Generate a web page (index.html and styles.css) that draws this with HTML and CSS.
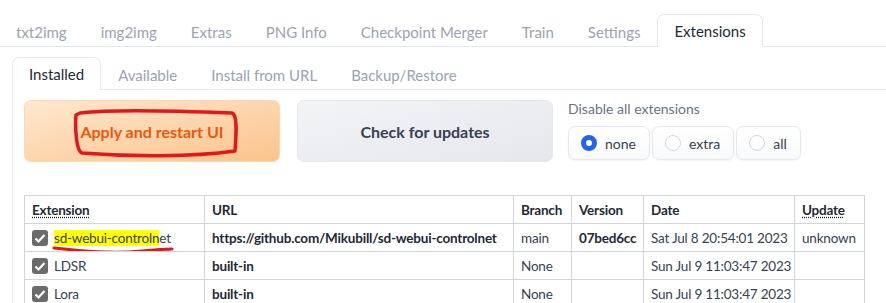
FILE: index.html
```html
<!DOCTYPE html>
<html lang="en">
<head>
    <meta charset="UTF-8">
    <title>Extensions</title>
    <link rel="stylesheet" href="styles.css">
</head>
<body>
    <nav class="tabs">
        <button class="tab">txt2img</button>
        <button class="tab">img2img</button>
        <button class="tab">Extras</button>
        <button class="tab">PNG Info</button>
        <button class="tab">Checkpoint Merger</button>
        <button class="tab">Train</button>
        <button class="tab">Settings</button>
        <button class="tab active">Extensions</button>
    </nav>
    <div class="subpage">
        <nav class="tabs subtabs">
            <button class="tab active">Installed</button>
            <button class="tab">Available</button>
            <button class="tab">Install from URL</button>
            <button class="tab">Backup/Restore</button>
        </nav>
        <div class="panel">
            <div class="actions">
                <button class="btn btn-primary">
                    Apply and restart UI
                    <svg class="scribble" width="170" height="52" viewBox="0 0 170 52">
                        <path d="M8 6 C40 2, 110 4, 160 6 C166 8, 164 30, 163 44 C120 50, 60 50, 10 46 C4 44, 3 20, 4 8 Z" fill="none" stroke="#e3161c" stroke-width="3.5" stroke-linejoin="round"/>
                    </svg>
                </button>
                <button class="btn btn-secondary">Check for updates</button>
                <div class="radio-block">
                    <div class="radio-label">Disable all extensions</div>
                    <div class="radio-group">
                        <label class="radio-item"><span class="radio checked"></span>none</label>
                        <label class="radio-item"><span class="radio"></span>extra</label>
                        <label class="radio-item"><span class="radio"></span>all</label>
                    </div>
                </div>
            </div>
            <table class="ext-table">
                <colgroup>
                    <col class="col-ext">
                    <col class="col-url">
                    <col class="col-branch">
                    <col class="col-version">
                    <col class="col-date">
                    <col class="col-update">
                </colgroup>
                <thead>
                    <tr>
                        <th><abbr>Extension</abbr></th>
                        <th>URL</th>
                        <th>Branch</th>
                        <th>Version</th>
                        <th>Date</th>
                        <th><abbr>Update</abbr></th>
                    </tr>
                </thead>
                <tbody>
                    <tr>
                        <td><span class="check"></span><span class="marked"><mark>sd-webui-controln</mark>et<svg class="underline" width="124" height="10" viewBox="0 0 124 10"><path d="M2 3 C30 6, 60 9, 90 6 C104 5, 114 4, 120 4" fill="none" stroke="#e3161c" stroke-width="3" stroke-linecap="round"/></svg></span></td>
                        <td class="bold">https://github.com/Mikubill/sd-webui-controlnet</td>
                        <td>main</td>
                        <td class="bold">07bed6cc</td>
                        <td>Sat Jul 8 20:54:01 2023</td>
                        <td>unknown</td>
                    </tr>
                    <tr>
                        <td><span class="check"></span>LDSR</td>
                        <td class="bold">built-in</td>
                        <td>None</td>
                        <td></td>
                        <td>Sun Jul 9 11:03:47 2023</td>
                        <td></td>
                    </tr>
                    <tr>
                        <td><span class="check"></span>Lora</td>
                        <td class="bold">built-in</td>
                        <td>None</td>
                        <td></td>
                        <td>Sun Jul 9 11:03:47 2023</td>
                        <td></td>
                    </tr>
                </tbody>
            </table>
        </div>
    </div>
</body>
</html>
```

FILE: styles.css
```css
body {
    margin: 0;
    padding: 0;
    background: #fff;
    font-family: 'Lato', 'Liberation Sans', sans-serif;
    color: #374151;
    overflow: hidden;
}
.tabs {
    display: flex;
    align-items: flex-end;
    border-bottom: 1px solid #e5e7eb;
    padding-top: 14px;
    margin: 0;
}
.tab {
    font-family: inherit;
    font-size: 15px;
    color: #9ca3af;
    background: none;
    border: 1px solid transparent;
    border-bottom: none;
    border-radius: 7px 7px 0 0;
    height: 32px;
    padding: 0 16px;
    margin-bottom: -1px;
    cursor: pointer;
}
.tab:first-child {
    margin-left: -1px;
}
.tab.active {
    color: #1f2937;
    background: #fff;
    border-color: #e5e7eb;
    height: 33px;
}
.subpage {
    padding: 10px 0 0 12px;
}
.subtabs {
    padding-top: 0;
}
.subtabs .tab:first-child {
    margin-left: 0;
}
.panel {
    border-left: 1px solid #e5e7eb;
    padding: 10px 0 0 11px;
    height: 400px;
}
.actions {
    display: flex;
    gap: 17px;
    align-items: flex-start;
}
.btn {
    position: relative;
    width: 256px;
    height: 62px;
    border-radius: 7px;
    font-family: inherit;
    font-size: 16px;
    font-weight: 700;
    cursor: pointer;
}
.btn-primary {
    color: #ea580c;
    background: linear-gradient(to bottom right, #fee8cf, #fbc38c);
    border: 1px solid #fed7aa;
}
.btn-secondary {
    color: #374151;
    background: linear-gradient(to bottom right, #f3f4f6, #e5e7eb);
    border: 1px solid #e5e7eb;
}
.scribble {
    position: absolute;
    left: 47px;
    top: 6px;
}
.radio-block {
    margin-left: -2px;
}
.radio-label {
    font-size: 14px;
    color: #6b7280;
    margin-bottom: 9px;
}
.radio-group {
    display: flex;
    gap: 2px;
}
.radio-item {
    display: flex;
    align-items: center;
    gap: 8px;
    height: 34px;
    box-sizing: border-box;
    padding: 0 13px 0 12px;
    border: 1px solid #e5e7eb;
    border-radius: 7px;
    background: linear-gradient(to bottom, #fff, #f9fafb);
    box-shadow: 0 1px 2px rgba(0,0,0,0.05);
    font-size: 14px;
    color: #374151;
}
.radio {
    width: 16px;
    height: 16px;
    box-sizing: border-box;
    border-radius: 50%;
    border: 1px solid #d1d5db;
    background: #fff;
}
.radio.checked {
    border: 5px solid #2563eb;
}
.ext-table {
    margin-top: 33px;
    border-collapse: collapse;
    table-layout: fixed;
    width: 840px;
    font-size: 13.5px;
    letter-spacing: -0.2px;
    color: #374151;
}
.ext-table th, .ext-table td {
    border: 1px solid #d1d5db;
    padding: 0 7px;
    height: 27px;
    text-align: left;
    white-space: nowrap;
    overflow: hidden;
}
.ext-table th {
    font-weight: 700;
    color: #1f2937;
}
.ext-table abbr {
    text-decoration: underline dotted;
    text-underline-offset: 2px;
}
.col-ext { width: 180px; }
.col-url { width: 309px; }
.col-branch { width: 58px; }
.col-version { width: 72px; }
.col-date { width: 151px; }
.col-update { width: 70px; }
.bold {
    font-weight: 700;
    color: #1f2937;
}
.check {
    display: inline-block;
    vertical-align: -3px;
    width: 16px;
    height: 16px;
    border-radius: 3px;
    margin-right: 6px;
    background: #6b6b6b url("data:image/svg+xml,%3Csvg xmlns='http://www.w3.org/2000/svg' viewBox='0 0 16 16'%3E%3Cpath d='M3.5 8.5l3 3 6-6.5' fill='none' stroke='white' stroke-width='2.2'/%3E%3C/svg%3E") center/16px no-repeat;
}
.marked {
    position: relative;
}
mark {
    background: #ffff00;
    color: inherit;
}
.underline {
    position: absolute;
    left: -2px;
    top: 15px;
}
```
